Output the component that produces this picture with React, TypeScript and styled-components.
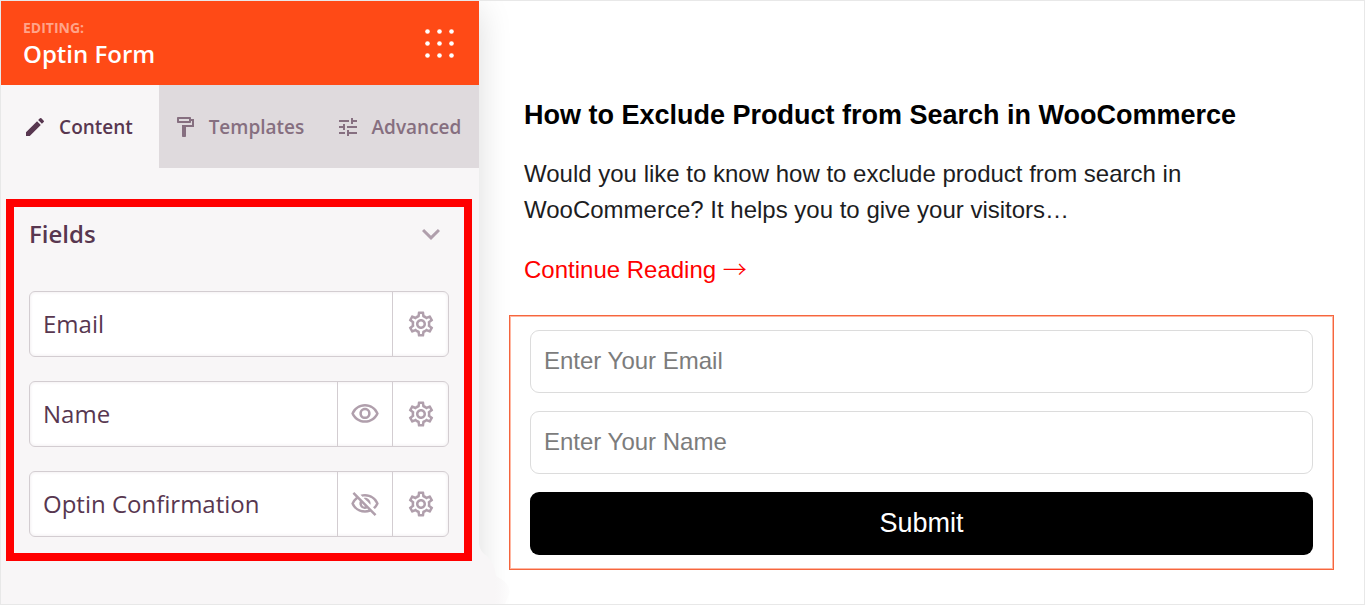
import React from "react";
import styled, { createGlobalStyle } from "styled-components";
import {
  MdEdit,
  MdExpandMore,
  MdOutlineFormatPaint,
  MdOutlineSettings,
  MdOutlineVisibility,
  MdOutlineVisibilityOff,
  MdTune,
} from "react-icons/md";

const GlobalStyle = createGlobalStyle`
  *, *::before, *::after { box-sizing: border-box; }
  body { margin: 0; background: #fff; }
  button, input { font-family: inherit; }
`;

const Page = styled.div`
  display: flex;
  min-height: 100vh;
  border: 1px solid #e8e8e8;
  background: #fff;
  overflow: hidden;
`;

const Sidebar = styled.aside`
  position: relative;
  flex: 0 0 478px;
  background: #f8f6f7;
  color: #583750;
  font-family: "Open Sans", sans-serif;
  box-shadow: 0 8px 32px rgba(0, 0, 0, 0.14);
`;

const SidebarFoot = styled.svg`
  position: absolute;
  left: 100%;
  bottom: 0;
  width: 32px;
  height: 60px;
`;

const Header = styled.header`
  display: flex;
  align-items: center;
  justify-content: space-between;
  height: 84px;
  padding: 2px 24px 0 22px;
  background: #ff4a16;
  color: #fff;
`;

const Eyebrow = styled.p`
  margin: 0;
  font-size: 14px;
  font-weight: 700;
  line-height: 20px;
  color: #ffa48a;
`;

const Title = styled.h1`
  margin: 0;
  font-size: 24px;
  font-weight: 600;
  line-height: 32px;
`;

const PlainButton = styled.button`
  display: flex;
  align-items: center;
  justify-content: center;
  padding: 0;
  border: 0;
  background: none;
  color: inherit;
  cursor: pointer;
`;

const Tabs = styled.nav`
  display: flex;
  height: 83px;
  background: #dfdadd;
`;

const Tab = styled(PlainButton)<{ $active?: boolean }>`
  flex: ${(p) => (p.$active ? "0 0 158px" : "1 1 auto")};
  gap: 12px;
  padding-right: 4px;
  background: ${(p) => (p.$active ? "#f8f6f7" : "transparent")};
  color: ${(p) => (p.$active ? "#583750" : "#866f80")};
  font-size: 19px;
  font-weight: 600;
  line-height: 28px;
`;

const FieldsPanel = styled.section`
  display: flex;
  flex-direction: column;
  gap: 24px;
  margin: 31px 7px 42px 5px;
  padding: 8px 15px 16px;
  border: 8px solid #f00;
`;

const PanelHeader = styled.div`
  display: flex;
  align-items: center;
  justify-content: space-between;
  height: 38px;
  margin-bottom: 14px;
`;

const PanelTitle = styled.h2`
  margin: 0;
  font-size: 24px;
  font-weight: 600;
  line-height: 32px;
`;

const FoldButton = styled(PlainButton)`
  width: 36px;
  height: 36px;
  color: #b09fac;
`;

const FieldRow = styled.div`
  display: flex;
  height: 66px;
  border: 1px solid #d3cdd1;
  border-radius: 6px;
  background: #fff;
  box-shadow: inset 0 0 3px 1px #f4f1f3;
`;

const FieldName = styled.span`
  flex: 1;
  padding-left: 13px;
  font-size: 24px;
  line-height: 64px;
`;

const FieldAction = styled(PlainButton)`
  width: 56px;
  border-left: 1px solid #d3cdd1;
  color: #b09fac;
`;

const VisibilityAction = styled(FieldAction)`
  width: 55px;
`;

const Preview = styled.main`
  flex: 1;
  min-width: 0;
  padding: 92px 30px 34px;
  font-family: "Liberation Sans", Arial, sans-serif;
`;

const Article = styled.article`
  padding: 0 15px;
  font-size: 24px;
  line-height: 36px;
  color: #1d1d1f;
`;

const ArticleTitle = styled.h2`
  margin: 0;
  font-size: 27px;
  line-height: 44px;
  color: #000;
`;

const Excerpt = styled.p`
  max-width: 700px;
  margin: 19px 0 24px;
`;

const MoreLink = styled.a`
  display: block;
  height: 36px;
  color: #f00;
  text-decoration: none;
`;

const Arrow = styled.span`
  font-family: "Noto Sans CJK JP", sans-serif;
  font-weight: 300;
  line-height: 1;
`;

const OptinForm = styled.form`
  display: flex;
  flex-direction: column;
  gap: 18px;
  margin-top: 27px;
  padding: 14px 20px;
  border: 1px solid #f5663e;
  box-shadow: inset 0 0 0 1px #ffb7a2;
`;

const TextInput = styled.input`
  width: 100%;
  height: 63px;
  padding: 0 13px 2px;
  border: 1px solid #dcdcdc;
  border-radius: 9px;
  font-size: 24px;
  &::placeholder { color: #7c7c7c; opacity: 1; }
`;

const SubmitButton = styled.button`
  height: 63px;
  border: 0;
  border-radius: 9px;
  background: #000;
  color: #fff;
  font-size: 27px;
  cursor: pointer;
`;

const fields = [
  { name: "Email" },
  { name: "Name", visible: true },
  { name: "Optin Confirmation", visible: false },
];

function DotsIcon() {
  const steps = [2.5, 14.5, 26.5];
  return (
    <svg width="30" height="30" viewBox="0 0 30 30" fill="currentColor" aria-hidden="true">
      {steps.map((y) => steps.map((x) => <circle key={`${x}-${y}`} cx={x} cy={y} r="2.3" />))}
    </svg>
  );
}

export default function App() {
  return (
    <>
      <GlobalStyle />
      <Page>
        <Sidebar>
          <Header>
            <div>
              <Eyebrow>EDITING:</Eyebrow>
              <Title>Optin Form</Title>
            </div>
            <PlainButton type="button" aria-label="Open menu">
              <DotsIcon />
            </PlainButton>
          </Header>
          <Tabs>
            <Tab type="button" $active>
              <MdEdit size={24} />
              Content
            </Tab>
            <Tab type="button">
              <MdOutlineFormatPaint size={24} />
              Templates
            </Tab>
            <Tab type="button">
              <MdTune size={24} />
              Advanced
            </Tab>
          </Tabs>
          <FieldsPanel>
            <PanelHeader>
              <PanelTitle>Fields</PanelTitle>
              <FoldButton type="button" aria-label="Collapse fields">
                <MdExpandMore size={36} />
              </FoldButton>
            </PanelHeader>
            {fields.map((field) => (
              <FieldRow key={field.name}>
                <FieldName>{field.name}</FieldName>
                {field.visible !== undefined && (
                  <VisibilityAction type="button" aria-label={`Toggle ${field.name}`}>
                    {field.visible ? <MdOutlineVisibility size={30} /> : <MdOutlineVisibilityOff size={30} />}
                  </VisibilityAction>
                )}
                <FieldAction type="button" aria-label={`${field.name} settings`}>
                  <MdOutlineSettings size={30} />
                </FieldAction>
              </FieldRow>
            ))}
          </FieldsPanel>
          <SidebarFoot viewBox="0 0 32 60" aria-hidden="true">
            <defs>
              <linearGradient id="foot-fade" x1="0" y1="0" x2="1" y2="0">
                <stop offset="0.5" stopColor="#f8f6f7" />
                <stop offset="1" stopColor="#f8f6f7" stopOpacity="0.2" />
              </linearGradient>
            </defs>
            <path d="M0 0 Q1 8 8 12 Q16 20 17 32 Q30 38 31 48 L26 60 H0 Z" fill="url(#foot-fade)" />
          </SidebarFoot>
        </Sidebar>
        <Preview>
          <Article>
            <ArticleTitle>How to Exclude Product from Search in WooCommerce</ArticleTitle>
            <Excerpt>
              Would you like to know how to exclude product from search in WooCommerce? It helps you to give your
              visitors…
            </Excerpt>
            <MoreLink href="#">
              Continue Reading <Arrow>→</Arrow>
            </MoreLink>
          </Article>
          <OptinForm onSubmit={(e) => e.preventDefault()}>
            <TextInput type="email" placeholder="Enter Your Email" aria-label="Email" />
            <TextInput type="text" placeholder="Enter Your Name" aria-label="Name" />
            <SubmitButton type="submit">Submit</SubmitButton>
          </OptinForm>
        </Preview>
      </Page>
    </>
  );
}
